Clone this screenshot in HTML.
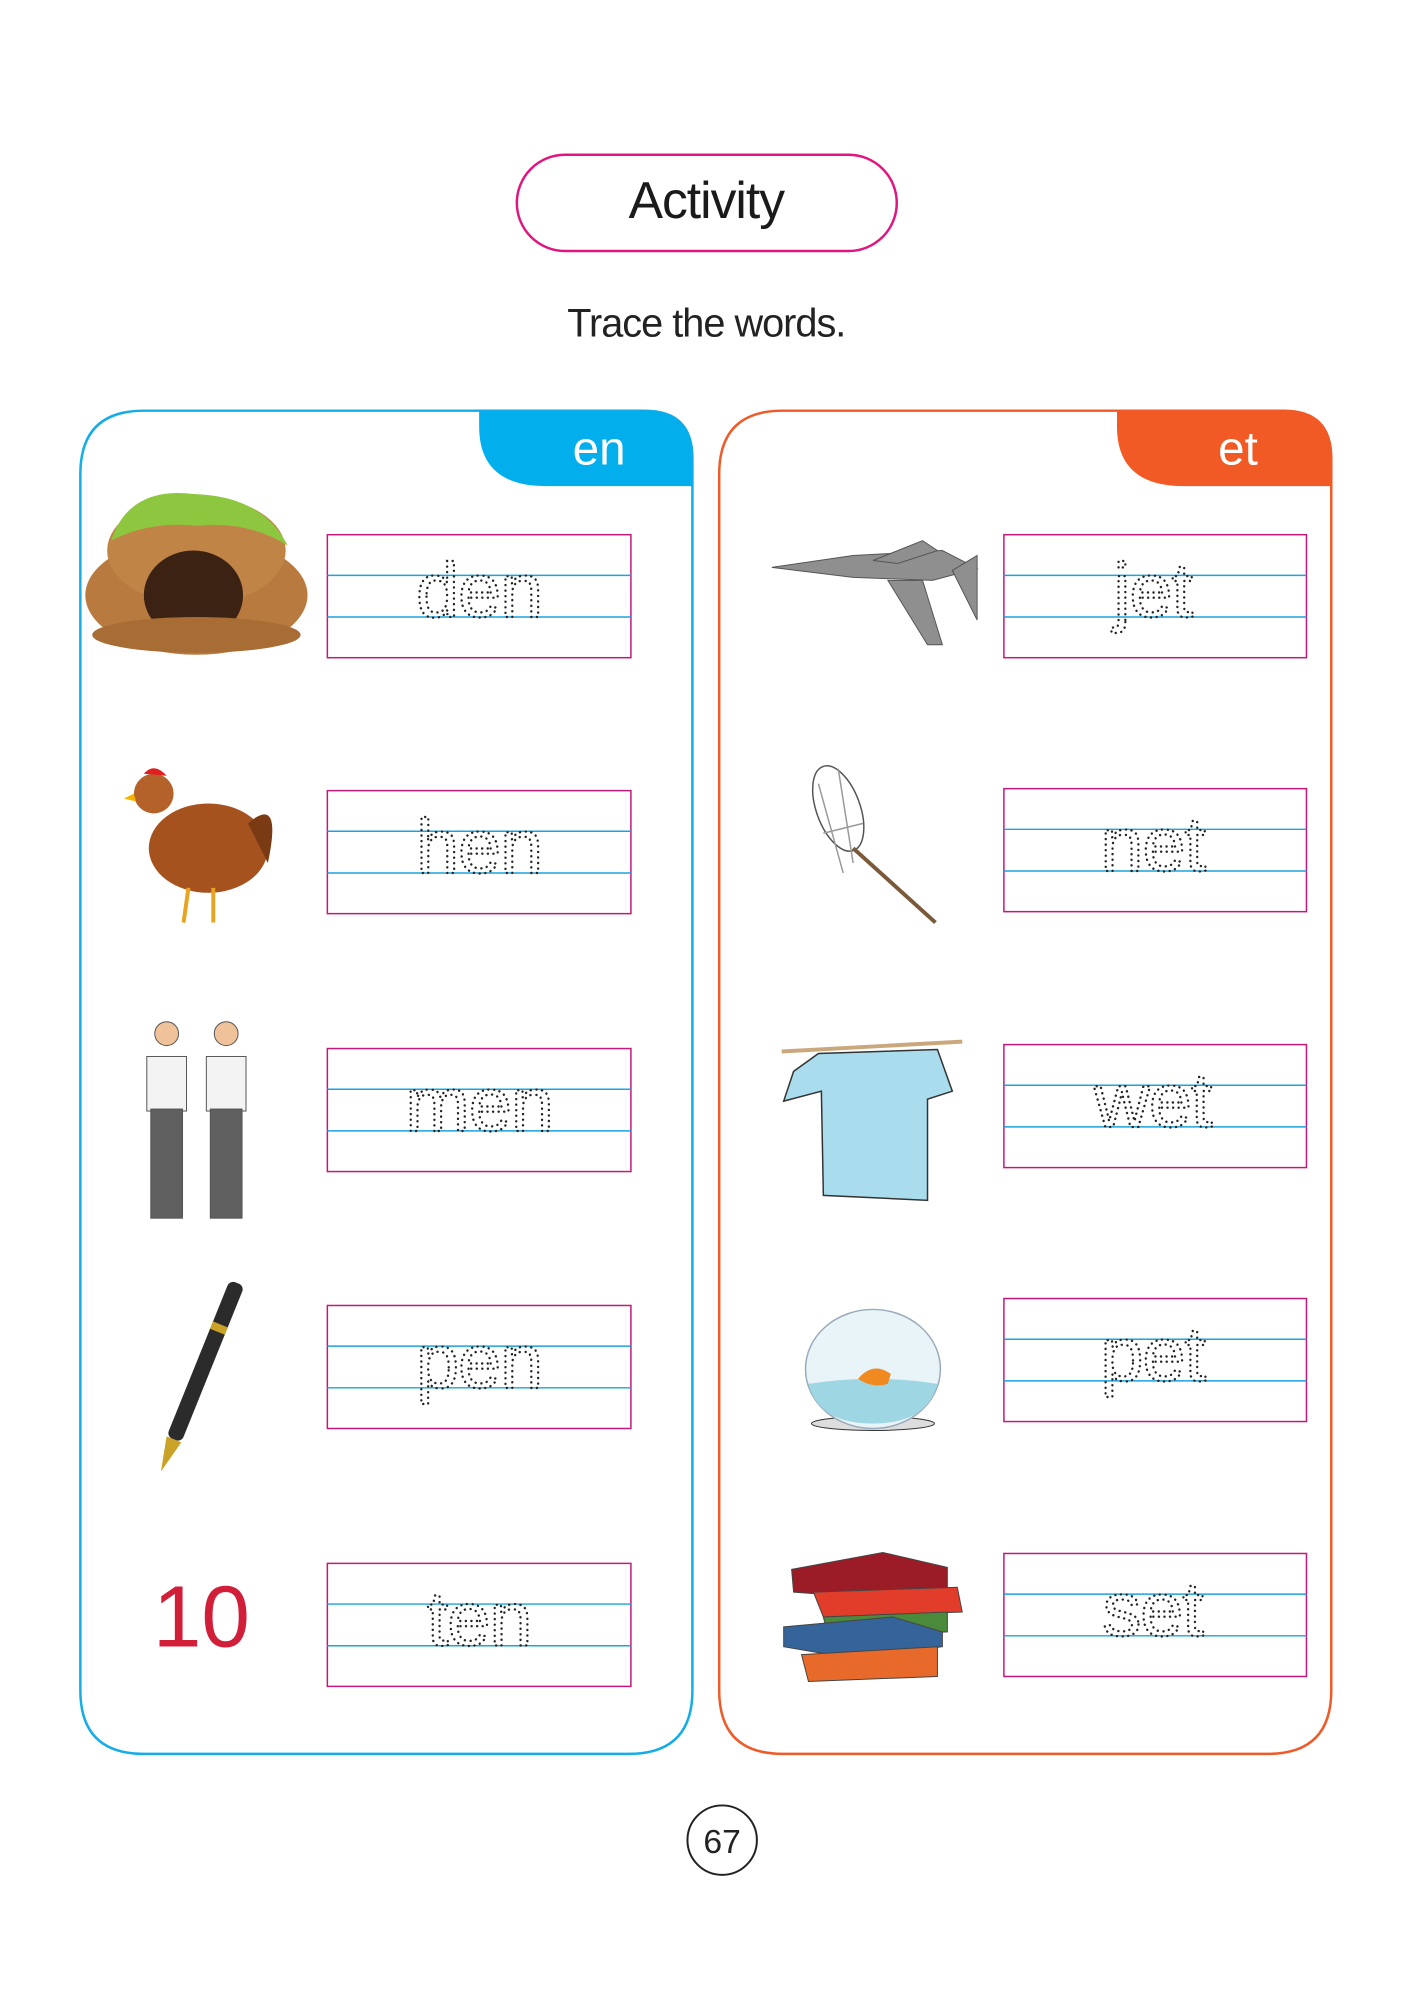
<!DOCTYPE html>
<html><head><meta charset="utf-8"><style>
html,body{margin:0;padding:0;background:#fff;}
svg{display:block}
.w{font-family:"Liberation Sans",sans-serif;font-size:78px;fill:none;stroke:#222;stroke-width:2.4;stroke-dasharray:0.1 5.5;stroke-linecap:round;text-anchor:middle;letter-spacing:-1px}
</style></head><body>
<svg width="1414" height="2000" viewBox="0 0 1414 2000" xmlns="http://www.w3.org/2000/svg">
<rect width="1414" height="2000" fill="#fff"/>
<g transform="scale(0.992)">
<rect x="521" y="156" width="383" height="97" rx="48.5" fill="#fff" stroke="#e0157f" stroke-width="2.5"/>
<text x="712" y="220" font-family="Liberation Sans,sans-serif" font-size="52" fill="#1a1a1a" text-anchor="middle" letter-spacing="-1">Activity</text>
<text x="712" y="339" font-family="Liberation Sans,sans-serif" font-size="40" fill="#222" text-anchor="middle" letter-spacing="-1">Trace the words.</text>

<path d="M145 414 H650 Q698 414 698 462 V1704 Q698 1768 634 1768 H145 Q81 1768 81 1704 V478 Q81 414 145 414 Z" fill="none" stroke="#16ace6" stroke-width="2.5"/>
<path d="M483 414 H650 Q698 414 698 462 V490 H550 Q483 490 483 430 Z" fill="#03aeed"/>
<text x="604" y="468" font-family="Liberation Sans,sans-serif" font-size="48" fill="#fff" text-anchor="middle">en</text>

<path d="M789 414 H1294 Q1342 414 1342 462 V1704 Q1342 1768 1278 1768 H789 Q725 1768 725 1704 V478 Q725 414 789 414 Z" fill="none" stroke="#ef5a28" stroke-width="2.5"/>
<path d="M1126 414 H1294 Q1342 414 1342 462 V490 H1193 Q1126 490 1126 430 Z" fill="#f15a24"/>
<text x="1248" y="468" font-family="Liberation Sans,sans-serif" font-size="48" fill="#fff" text-anchor="middle">et</text>

<g fill="none" stroke-width="1.5">
<g transform="translate(330,539)"><rect width="306" height="124" stroke="#c2187a"/><line x1="0" y1="41" x2="306" y2="41" stroke="#1aa3dc"/><line x1="0" y1="83" x2="306" y2="83" stroke="#1aa3dc"/></g>
<g transform="translate(330,797)"><rect width="306" height="124" stroke="#c2187a"/><line x1="0" y1="41" x2="306" y2="41" stroke="#1aa3dc"/><line x1="0" y1="83" x2="306" y2="83" stroke="#1aa3dc"/></g>
<g transform="translate(330,1057)"><rect width="306" height="124" stroke="#c2187a"/><line x1="0" y1="41" x2="306" y2="41" stroke="#1aa3dc"/><line x1="0" y1="83" x2="306" y2="83" stroke="#1aa3dc"/></g>
<g transform="translate(330,1316)"><rect width="306" height="124" stroke="#c2187a"/><line x1="0" y1="41" x2="306" y2="41" stroke="#1aa3dc"/><line x1="0" y1="83" x2="306" y2="83" stroke="#1aa3dc"/></g>
<g transform="translate(330,1576)"><rect width="306" height="124" stroke="#c2187a"/><line x1="0" y1="41" x2="306" y2="41" stroke="#1aa3dc"/><line x1="0" y1="83" x2="306" y2="83" stroke="#1aa3dc"/></g>
<g transform="translate(1012,539)"><rect width="305" height="124" stroke="#c2187a"/><line x1="0" y1="41" x2="305" y2="41" stroke="#1aa3dc"/><line x1="0" y1="83" x2="305" y2="83" stroke="#1aa3dc"/></g>
<g transform="translate(1012,795)"><rect width="305" height="124" stroke="#c2187a"/><line x1="0" y1="41" x2="305" y2="41" stroke="#1aa3dc"/><line x1="0" y1="83" x2="305" y2="83" stroke="#1aa3dc"/></g>
<g transform="translate(1012,1053)"><rect width="305" height="124" stroke="#c2187a"/><line x1="0" y1="41" x2="305" y2="41" stroke="#1aa3dc"/><line x1="0" y1="83" x2="305" y2="83" stroke="#1aa3dc"/></g>
<g transform="translate(1012,1309)"><rect width="305" height="124" stroke="#c2187a"/><line x1="0" y1="41" x2="305" y2="41" stroke="#1aa3dc"/><line x1="0" y1="83" x2="305" y2="83" stroke="#1aa3dc"/></g>
<g transform="translate(1012,1566)"><rect width="305" height="124" stroke="#c2187a"/><line x1="0" y1="41" x2="305" y2="41" stroke="#1aa3dc"/><line x1="0" y1="83" x2="305" y2="83" stroke="#1aa3dc"/></g>
</g>

<text class="w" x="483" y="622">den</text>
<text class="w" x="483" y="880">hen</text>
<text class="w" x="483" y="1140">men</text>
<text class="w" x="483" y="1399">pen</text>
<text class="w" x="483" y="1659">ten</text>
<text class="w" x="1162" y="622">jet</text>
<text class="w" x="1162" y="878">net</text>
<text class="w" x="1162" y="1136">wet</text>
<text class="w" x="1162" y="1392">pet</text>
<text class="w" x="1162" y="1649">set</text>

<g>
<ellipse cx="198" cy="600" rx="112" ry="60" fill="#b87a3f"/>
<ellipse cx="198" cy="555" rx="90" ry="55" fill="#c18447"/>
<path d="M112 545 Q130 490 195 498 Q265 500 290 550 Q250 525 200 530 Q150 525 112 545Z" fill="#8dc63f"/>
<ellipse cx="195" cy="600" rx="50" ry="45" fill="#3b2212"/>
<ellipse cx="198" cy="640" rx="105" ry="18" fill="#a86c35"/>
</g>
<g>
<ellipse cx="210" cy="855" rx="60" ry="45" fill="#a5521f"/>
<path d="M250 830 Q285 800 270 870 Z" fill="#7a3a14"/>
<circle cx="155" cy="800" r="20" fill="#b5612a"/>
<path d="M145 780 Q155 768 168 782Z" fill="#e02020"/>
<path d="M135 800 L125 805 L137 808Z" fill="#f4b400"/>
<path d="M190 895 L185 930 M215 895 L215 930" stroke="#e6a420" stroke-width="4"/>
</g>
<g stroke="#555" stroke-width="1">
<g transform="translate(168,1030)"><circle cx="0" cy="12" r="12" fill="#f0c29a"/><rect x="-20" y="35" width="40" height="55" fill="#f3f3f3"/><rect x="-16" y="88" width="32" height="110" fill="#5f5f5f"/></g>
<g transform="translate(228,1030)"><circle cx="0" cy="12" r="12" fill="#f0c29a"/><rect x="-20" y="35" width="40" height="55" fill="#f3f3f3"/><rect x="-16" y="88" width="32" height="110" fill="#5f5f5f"/></g>
</g>
<g transform="rotate(22 195 1405)"><rect x="186" y="1285" width="16" height="170" rx="6" fill="#2b2b2b"/><rect x="186" y="1330" width="16" height="8" fill="#c9a227"/><path d="M186 1455 L194 1490 L202 1455Z" fill="#c9a227"/></g>
<text x="203" y="1660" font-family="Liberation Sans,sans-serif" font-size="88" fill="#d11f3a" text-anchor="middle">10</text>
<g fill="#8f8f8f" stroke="#555" stroke-width="1">
<path d="M778 572 L860 560 L950 555 L985 573 L940 585 L860 582Z"/>
<path d="M880 565 L930 545 L945 555 L905 568Z"/>
<path d="M895 585 L935 650 L950 650 L930 585Z"/>
<path d="M960 575 L985 560 L985 625 Z"/>
</g>
<g fill="none" stroke="#555" stroke-width="1.5">
<ellipse cx="845" cy="815" rx="22" ry="45" transform="rotate(-20 845 815)"/>
<path d="M825 790 L850 880 M845 775 L860 870 M830 840 L870 830" stroke="#999"/>
<line x1="860" y1="855" x2="943" y2="930" stroke="#7a5a3a" stroke-width="4"/>
</g>
<g>
<line x1="788" y1="1060" x2="970" y2="1050" stroke="#caa87c" stroke-width="4"/>
<path d="M825 1062 L945 1058 L960 1100 L935 1108 L935 1210 L830 1205 L828 1100 L790 1110 L800 1080Z" fill="#a9dced" stroke="#333" stroke-width="1.5"/>
</g>
<g>
<ellipse cx="880" cy="1435" rx="62" ry="7" fill="#ddd" stroke="#333"/>
<ellipse cx="880" cy="1380" rx="68" ry="60" fill="#e8f4f8" stroke="#9ab" stroke-width="1.5"/>
<path d="M815 1395 Q880 1385 945 1395 Q935 1435 880 1435 Q825 1435 815 1395Z" fill="#9fd6e4"/>
<path d="M865 1390 Q880 1372 898 1385 L895 1395 Q880 1400 865 1390Z" fill="#f08a20"/>
</g>
<g stroke="#444" stroke-width="1">
<path d="M798 1582 L890 1565 L955 1580 L955 1600 L870 1610 L800 1605Z" fill="#9b1c26"/>
<path d="M820 1605 L965 1600 L970 1625 L830 1630Z" fill="#e23c2a"/>
<path d="M830 1630 L955 1625 L955 1645 L835 1650Z" fill="#4c8a3b"/>
<path d="M790 1640 L900 1630 L950 1645 L950 1660 L860 1672 L790 1660Z" fill="#35649a"/>
<path d="M808 1668 L945 1660 L945 1690 L815 1695Z" fill="#e86a2a"/>
</g>

<circle cx="728" cy="1855" r="35" fill="none" stroke="#222" stroke-width="2"/>
<text x="728" y="1868" font-family="Liberation Sans,sans-serif" font-size="34" fill="#222" text-anchor="middle">67</text>
</g>
</svg>
</body></html>
